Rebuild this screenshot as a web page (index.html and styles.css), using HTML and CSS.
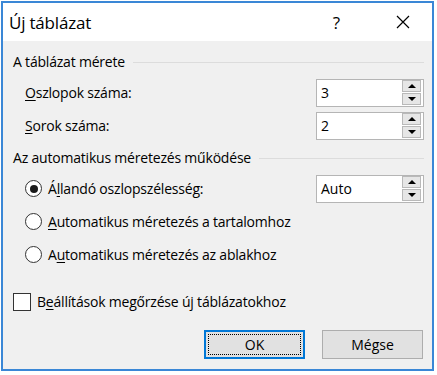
FILE: index.html
```html
<!DOCTYPE html>
<html lang="hu">
<head>
<meta charset="utf-8">
<title>Új táblázat</title>
<link rel="stylesheet" href="styles.css">
</head>
<body>
<div class="dialog">
  <div class="titlebar">
    <span class="title">Új táblázat</span>
    <span class="help">?</span>
    <svg class="close" width="14" height="14" viewBox="0 0 14 14"><path d="M1 1L13 13M13 1L1 13" stroke="#000" stroke-width="1.2" fill="none"/></svg>
  </div>
  <div class="content">
    <div class="group-head"><span>A táblázat mérete</span><span class="rule"></span></div>
    <div class="row indent">
      <span class="label"><u>O</u>szlopok száma:</span>
      <div class="spin"><span class="val">3</span><span class="btns"><span class="b up"></span><span class="b down"></span></span></div>
    </div>
    <div class="row indent">
      <span class="label"><u>S</u>orok száma:</span>
      <div class="spin"><span class="val">2</span><span class="btns"><span class="b up"></span><span class="b down"></span></span></div>
    </div>
    <div class="group-head"><span>Az automatikus méretezés működése</span><span class="rule"></span></div>
    <div class="row indent">
      <span class="opt"><span class="radio on"></span><span>Á<u>l</u>landó oszlopszélesség:</span></span>
      <div class="spin"><span class="val">Auto</span><span class="btns"><span class="b up"></span><span class="b down"></span></span></div>
    </div>
    <div class="row indent">
      <span class="opt"><span class="radio"></span><span><u>A</u>utomatikus méretezés a tartalomhoz</span></span>
    </div>
    <div class="row indent">
      <span class="opt"><span class="radio"></span><span>A<u>u</u>tomatikus méretezés az ablakhoz</span></span>
    </div>
    <div class="row check-row">
      <span class="opt"><span class="check"></span><span>B<u>e</u>állítások megőrzése új táblázatokhoz</span></span>
    </div>
    <div class="buttons">
      <button class="btn default"><span class="focus">OK</span></button>
      <button class="btn">Mégse</button>
    </div>
  </div>
</div>
</body>
</html>
```

FILE: styles.css
```css
* { box-sizing: border-box; }
html, body { margin: 0; padding: 0; background: #fff; }
body { padding: 1px 0 0 1px; font-family: "Open Sans", "Noto Sans", sans-serif; font-size: 14px; color: #000; }
.dialog {
  width: 433px;
  height: 370px;
  border: 2px solid #3a87d6;
  background: #f0f0f0;
  display: flex;
  flex-direction: column;
}
.titlebar {
  height: 38px;
  background: #fff;
  display: flex;
  align-items: center;
  padding-left: 6px;
  flex: none;
}
.title { font-size: 17px; flex: 1; letter-spacing: -0.2px; }
.help { font-size: 17px; margin-right: 56px; }
.close { margin-right: 22px; }
.content { padding: 5px 8px 0 10px; letter-spacing: -0.2px; }
.group-head { height: 30px; display: flex; align-items: center; gap: 8px; }
.rule { flex: 1; height: 1px; background: #dcdcdc; margin-top: 2px; }
.row { height: 33px; display: flex; align-items: center; justify-content: space-between; }
.indent { padding-left: 12px; }
.label u, .opt u { text-decoration-thickness: 1px; text-underline-offset: 2px; }
.spin {
  width: 108px; height: 28px;
  background: #fff;
  border: 1px solid #b5b5b5;
  display: flex; align-items: center; justify-content: space-between;
  padding: 1px 2px 1px 4px;
  letter-spacing: 0;
}
.val { font-size: 14px; }
.btns { display: flex; flex-direction: column; gap: 1px; width: 19px; }
.b {
  height: 12px;
  background: #e6e6e6;
  border: 1px solid #b9b9b9;
  position: relative;
}
.b::after {
  content: "";
  position: absolute; left: 5px;
  border-left: 4px solid transparent; border-right: 4px solid transparent;
}
.up::after { top: 3px; border-bottom: 4px solid #000; }
.down::after { top: 3px; border-top: 4px solid #000; }
.opt { display: flex; align-items: center; gap: 6px; }
.radio {
  width: 17px; height: 17px; border-radius: 50%;
  border: 1px solid #333; background: #fff;
  display: flex; align-items: center; justify-content: center;
}
.radio.on::after { content: ""; width: 8px; height: 8px; border-radius: 50%; background: #1a1a1a; }
.check-row { margin-top: 14px; }
.check { width: 18px; height: 18px; border: 1px solid #333; background: #fff; }
.buttons { display: flex; justify-content: flex-end; gap: 17px; margin-top: 12px; padding-right: 1px; }
.btn {
  width: 101px; height: 29px;
  background: #e1e1e1;
  border: 1px solid #adadad;
  font-family: inherit; font-size: 14px; color: #000;
  padding: 0;
  display: flex; align-items: center; justify-content: center;
}
.btn.default { border: 2px solid #0078d7; padding: 2px; }
.focus { flex: 1; align-self: stretch; border: 1px dotted #000; display: flex; align-items: center; justify-content: center; }
```
